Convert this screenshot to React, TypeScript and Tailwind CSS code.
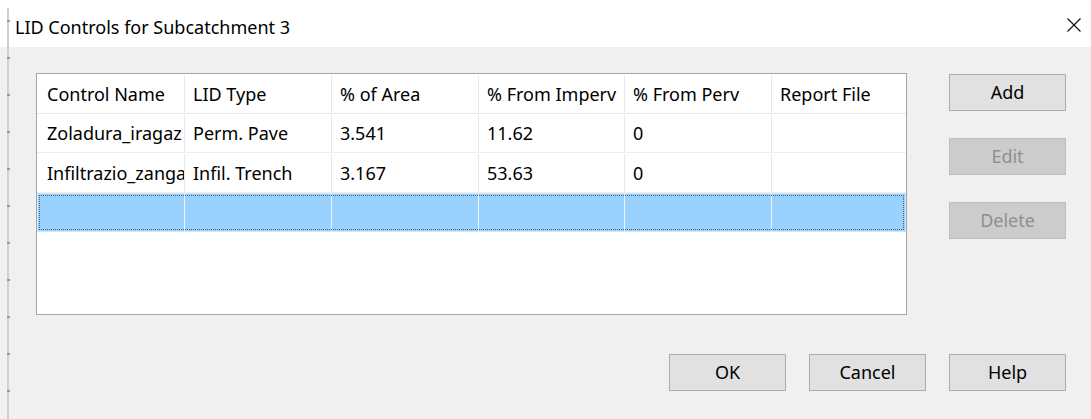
import React from "react";

const FONT = { fontFamily: '"Noto Sans", "Open Sans", "Liberation Sans", sans-serif' };

type Row = string[];

const columns = [
  { label: "Control Name", w: "w-[148px]", pad: "pl-[10px]" },
  { label: "LID Type", w: "w-[147px]", pad: "pl-[8px]" },
  { label: "% of Area", w: "w-[147px]", pad: "pl-[8px]" },
  { label: "% From Imperv", w: "w-[146px]", pad: "pl-[8px]" },
  { label: "% From Perv", w: "w-[147px]", pad: "pl-[8px]" },
  { label: "Report File", w: "w-[134px]", pad: "pl-[8px]" },
];

const rows: Row[] = [
  ["Zoladura_iragaz", "Perm. Pave", "3.541", "11.62", "0", ""],
  ["Infiltrazio_zanga", "Infil. Trench", "3.167", "53.63", "0", ""],
];

function Cell({ i, text, last }: { i: number; text: string; last?: boolean }) {
  const c = columns[i];
  return (
    <div
      className={`${c.w} ${c.pad} flex items-center overflow-hidden whitespace-nowrap shrink-0 ${
        last ? "" : "border-r border-[#e8e8e8]"
      }`}
    >
      {text}
    </div>
  );
}

function Button({ label, disabled }: { label: string; disabled?: boolean }) {
  return (
    <button
      className={`w-[117px] h-[37px] border flex items-center justify-center text-[18px] ${
        disabled
          ? "bg-[#cccccc] border-[#bfbfbf] text-[#8f8f8f]"
          : "bg-[#e1e1e1] border-[#adadad] text-black"
      }`}
      style={FONT}
    >
      {label}
    </button>
  );
}

export default function App() {
  return (
    <div className="w-[1091px] h-[419px] flex bg-white overflow-hidden text-black" style={FONT}>
      {/* window edge behind the dialog, with its ruler ticks */}
      <div className="w-[10px] shrink-0 flex flex-col bg-[linear-gradient(to_bottom,#ffffff_47px,#f0f0f0_47px)]">
        <div className="mt-[8px] ml-[7px] w-[3px] flex-1 border-l-2 border-[#cfcfcf] flex flex-col pt-[12px] gap-[35px]">
          {Array.from({ length: 11 }).map((_, k) => (
            <div key={k} className="-ml-[2px] w-[3px] h-[2px] bg-[#9a9a9a]" />
          ))}
        </div>
      </div>

      <div className="flex-1 flex flex-col">
        {/* title bar */}
        <div className="h-[47px] flex items-center justify-between pl-[5px] pr-[9px] bg-white">
          <span className="text-[18px] pt-[8px]">LID Controls for Subcatchment 3</span>
          <svg width="16" height="16" viewBox="0 0 16 16" className="mt-[2px]">
            <path d="M1.5 1.5 L14.5 14.5 M14.5 1.5 L1.5 14.5" stroke="#111" strokeWidth="1.2" fill="none" />
          </svg>
        </div>

        {/* dialog body */}
        <div className="flex-1 bg-[#f0f0f0] pl-[26px] pr-[25px] pt-[26px] flex flex-col">
          <div className="flex">
            <div className="w-[871px] h-[242px] border border-[#a5a5a5] bg-white flex flex-col text-[18px]">
              <div className="h-[40px] flex border-b border-[#e8e8e8] pt-[2px]">
                {columns.map((c, i) => (
                  <Cell key={c.label} i={i} text={c.label} last={i === columns.length - 1} />
                ))}
              </div>
              {rows.map((r, ri) => (
                <div
                  key={ri}
                  className={`${ri === 0 ? "h-[39px]" : "h-[40px]"} flex border-b border-[#eeeeee] pt-[1px]`}
                >
                  {r.map((t, i) => (
                    <Cell key={i} i={i} text={t} last={i === r.length - 1} />
                  ))}
                </div>
              ))}
              <div className="relative h-[39px] flex bg-[#99d1ff] border border-[#cce8ff]">
                {columns.map((c, i) => (
                  <div
                    key={c.label}
                    className={`${c.w} shrink-0 ${i === columns.length - 1 ? "" : "border-r border-[#e8f4ff]"} ${
                      i === 0 ? "-ml-px" : ""
                    }`}
                  />
                ))}
                <div className="absolute inset-[1px] border border-dotted border-[#5a5a5a]" />
              </div>
            </div>

            <div className="ml-[42px] pt-[1px] flex flex-col gap-[27px]">
              <Button label="Add" />
              <Button label="Edit" disabled />
              <Button label="Delete" disabled />
            </div>
          </div>

          <div className="mt-[39px] flex justify-end gap-[23px]">
            <Button label="OK" />
            <Button label="Cancel" />
            <Button label="Help" />
          </div>
        </div>
      </div>
    </div>
  );
}
